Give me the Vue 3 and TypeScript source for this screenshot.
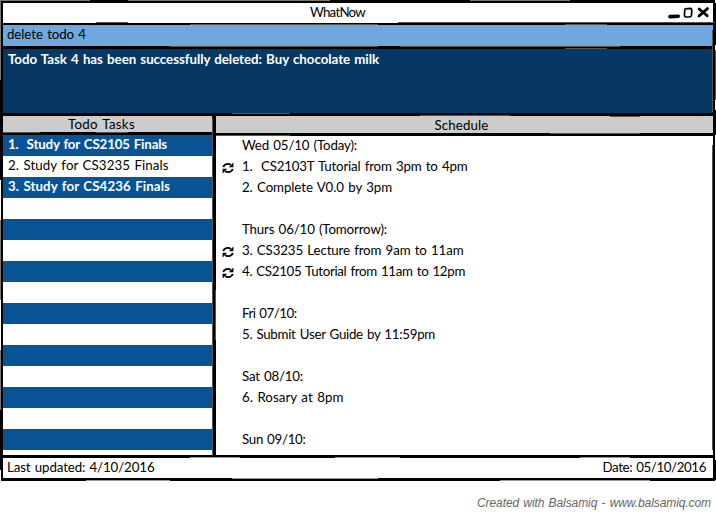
<script setup lang="ts">
interface Entry {
  text: string
  width: number
  recurring?: boolean
}

const todos: Entry[] = [
  { text: '1.  Study for CS2105 Finals', width: 159 },
  { text: '2. Study for CS3235 Finals', width: 160.5 },
  { text: '3. Study for CS4236 Finals', width: 162 },
  ...Array.from({ length: 13 }, () => ({ text: '', width: 0 })),
]

const schedule: Entry[] = [
  { text: 'Wed 05/10 (Today):', width: 115 },
  { text: '1.  CS2103T Tutorial from 3pm to 4pm', width: 225.5, recurring: true },
  { text: '2. Complete V0.0 by 3pm', width: 150 },
  { text: '', width: 0 },
  { text: 'Thurs 06/10 (Tomorrow):', width: 145 },
  { text: '3. CS3235 Lecture from 9am to 11am', width: 221.5, recurring: true },
  { text: '4. CS2105 Tutorial from 11am to 12pm', width: 223, recurring: true },
  { text: '', width: 0 },
  { text: 'Fri 07/10:', width: 54.5 },
  { text: '5. Submit User Guide by 11:59pm', width: 193 },
  { text: '', width: 0 },
  { text: 'Sat 08/10:', width: 61 },
  { text: '6. Rosary at 8pm', width: 101.5 },
  { text: '', width: 0 },
  { text: 'Sun 09/10:', width: 63.5 },
]

// Spreads a label's letters so that it fills the given width.
const vFit = {
  mounted(el: HTMLElement, binding: { value: number }) {
    const count = (el.textContent ?? '').length
    if (count < 2) return
    const natural = el.getBoundingClientRect().width
    el.style.letterSpacing = `${(binding.value - natural) / count}px`
  },
}
</script>

<template>
  <div class="page">
    <main class="window">
      <header class="titlebar">
        <span v-fit="55" class="label">WhatNow</span>
        <svg class="controls" width="44" height="14" viewBox="0 0 44 14">
          <path d="M4 10.6 L12.3 10.2" stroke="#000" stroke-width="3.6" stroke-linecap="round" />
          <path d="M19.5 2.8 L24 2.3 Q26 2.6 25.8 4.8 L25.4 9.4 Q25.2 11 23.2 11 L20 10.9 Q18.3 10.8 18.5 8.6 L18.7 4.3 Q18.8 2.9 19.5 2.8Z" fill="none" stroke="#000" stroke-width="1.7" />
          <path d="M33.2 3 L41.2 9.8 M41.5 2.6 L33 10" stroke="#000" stroke-width="2.8" stroke-linecap="round" />
        </svg>
      </header>

      <div class="command"><span v-fit="79" class="label">delete todo 4</span></div>

      <div class="message"><span v-fit="371" class="label">Todo Task 4 has been successfully deleted: Buy chocolate milk</span></div>

      <div class="panels">
        <section class="todo">
          <h2><span v-fit="67" class="label">Todo Tasks</span></h2>
          <ul>
            <li v-for="(item, i) in todos" :key="i">
              <span v-fit="item.width" class="label">{{ item.text }}</span>
            </li>
          </ul>
        </section>
        <section class="schedule">
          <h2><span v-fit="54" class="label">Schedule</span></h2>
          <ul>
            <li v-for="(item, i) in schedule" :key="i">
              <span class="marker">
                <svg v-if="item.recurring" width="12" height="12" viewBox="0 0 12 12">
                  <path d="M1.3 5.2 C1.8 2 6 .9 8.8 2.8 M10.7 6.8 C10.2 10 6 11.1 3.2 9.2" fill="none" stroke="#000" stroke-width="1.9" />
                  <path d="M11.4 0.6 V5.2 H6.8Z M0.6 11.4 V6.8 H5.2Z" />
                </svg>
              </span>
              <span v-fit="item.width" class="label">{{ item.text }}</span>
            </li>
          </ul>
        </section>
      </div>

      <footer class="status">
        <span v-fit="147.5" class="label">Last updated: 4/10/2016</span>
        <span v-fit="103.5" class="label">Date: 05/10/2016</span>
      </footer>
    </main>

    <p class="credit"><span v-fit="234" class="label">Created with Balsamiq - www.balsamiq.com</span></p>

    <svg class="strokes" width="716" height="482" viewBox="0 0 716 482" fill="none">
      <path stroke="#777" d="M0 .5H90 M128 .5H330 M470 .5H570 M.5 0V80 M.5 220V300 M.5 350V410" />
      <path stroke="#555" d="M96 22.5H128 M190 24.5H378 M398 22.5H716 M565 24.5H607 M170 46.5H378 M400 46.5H620 M565 48.5H607 M232 113.5H290 M420 115.5H510 M610 116.5H640 M3 132.5H40 M96 132.5H128 M216 135.5H290 M550 133.5H640" />
      <path stroke="#999" d="M190 457.5H240 M335 457.5H400 M580 457.5H630 M232 478.5H378 M86 480.5H170 M500 480.5H650" />
      <path stroke="#555" d="M212.5 118V455 M215.5 290V340 M712.5 30V112 M715.5 50V100 M712.5 145V450" />
      <path stroke="#000" d="M.5 80V180 M.5 410V470 M715.5 3V45 M715.5 110V135 M715.5 460V480" />
    </svg>
  </div>
</template>

<style>
body {
  margin: 0;
  background: #fff;
}
</style>

<style scoped>
.page {
  position: relative;
  width: 716px;
  height: 512px;
  overflow: hidden;
  background: #fff;
  color: #000;
  font: 13.3px/21px Lato, "Open Sans", sans-serif;
}
.window {
  display: flex;
  flex-direction: column;
  box-sizing: border-box;
  width: 714px;
  height: 481px;
  margin-left: 1px;
  border: 2px solid #000;
  border-top-width: 3px;
  border-bottom-width: 3px;
}
.label {
  display: inline-block;
  white-space: pre;
  word-spacing: 1px;
}
h2,
ul,
p {
  margin: 0;
  padding: 0;
  font-weight: normal;
}
.titlebar {
  display: flex;
  justify-content: space-between;
  height: 20px;
  padding: 0 3px 0 307px;
  line-height: 19px;
  border-bottom: 2px solid #000;
}
.controls {
  margin-top: 3px;
}
.command {
  height: 21px;
  padding-left: 4px;
  line-height: 19px;
  background: #6fa8dc;
  border-bottom: 3px solid #000;
}
.message {
  height: 64px;
  padding-left: 5px;
  line-height: 21px;
  background: #073763;
  border-bottom: 3px solid #000;
  color: #fff;
  font-weight: 700;
}
.panels {
  display: flex;
  height: 339px;
  border-bottom: 3px solid #000;
}
.todo {
  width: 209px;
  border-right: 4px solid #000;
}
.schedule {
  flex: 1;
}
h2 {
  font-size: 13.3px;
  text-align: center;
  background: #ccc;
  border-bottom: 3px solid #000;
}
.todo h2 {
  height: 16px;
  line-height: 17px;
  padding-right: 12px;
}
.schedule h2 {
  height: 17px;
  line-height: 19px;
  padding-right: 6px;
}
ul {
  list-style: none;
}
.todo ul {
  height: 320px;
  overflow: hidden;
}
li {
  height: 21px;
}
.todo li {
  padding-left: 5px;
  line-height: 19px;
}
.todo li:nth-child(odd) {
  background: #085394;
  color: #fff;
  font-weight: 700;
}
.schedule ul {
  height: 319px;
  overflow: hidden;
}
.schedule li {
  display: flex;
  line-height: 19px;
}
.marker {
  width: 20px;
  padding: 5px 0 0 6px;
  line-height: 0;
}
.status {
  display: flex;
  justify-content: space-between;
  flex: 1;
  padding: 0 7px 0 4px;
  line-height: 19px;
}
.credit {
  padding: 12px 5px 0 0;
  line-height: 20px;
  text-align: right;
  color: #666;
  font-family: "Liberation Sans", Arial, sans-serif;
  font-style: italic;
  font-size: 12px;
}
.strokes {
  position: absolute;
  top: 0;
  left: 0;
  pointer-events: none;
}
</style>
